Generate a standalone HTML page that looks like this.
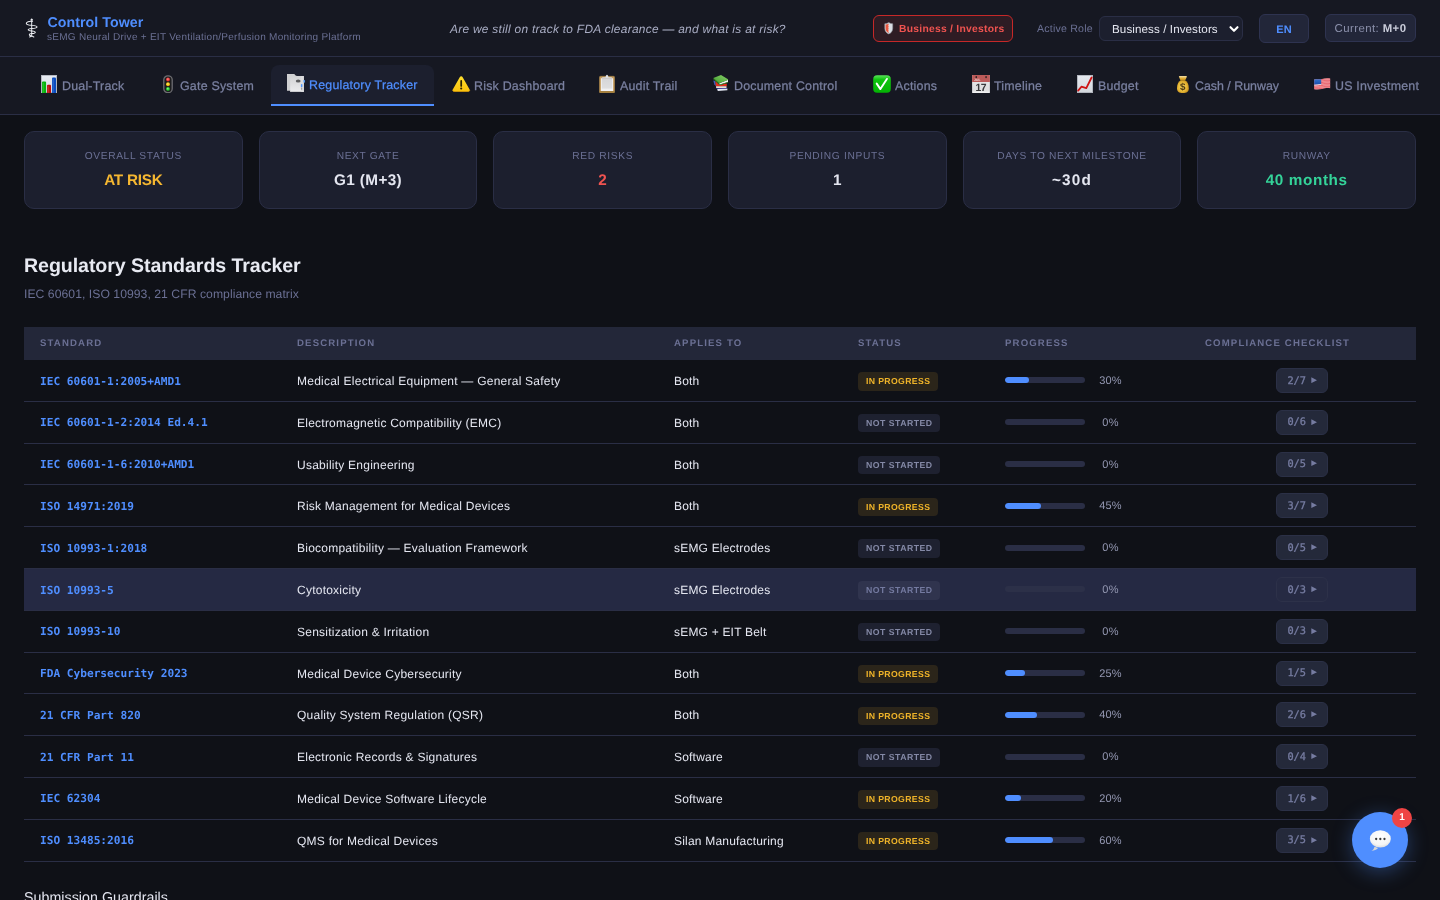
<!DOCTYPE html>
<html lang="en">
<head>
<meta charset="utf-8">
<title>Control Tower — Regulatory Tracker</title>
<style>
*{box-sizing:border-box;margin:0;padding:0}
html,body{width:1440px;height:900px;overflow:hidden}
body{text-rendering:geometricPrecision;background:#0f1117;color:#e4e6f0;font-family:"Liberation Sans",sans-serif;font-size:12px;position:relative}
svg{display:block}
#app{position:absolute;left:0;top:0;width:1440px;height:900px;overflow:hidden;will-change:transform}
/* ---------- header ---------- */
.hdr{position:absolute;left:0;top:0;width:1440px;height:57px;background:#161822;border-bottom:1px solid #2a2e45}
.logo{position:absolute;left:25px;top:17.700px;width:14px;height:20px}
.brand{position:absolute;left:47.500px;top:14px;font-size:14.2px;font-weight:700;color:#4f8eff;line-height:18px;white-space:nowrap;letter-spacing:.05px}
.sub{position:absolute;left:47px;top:31px;font-size:10px;color:#6b7094;line-height:13.4px;white-space:nowrap;letter-spacing:.27px}
.tag{position:absolute;left:450px;top:21px;font-size:11.9px;font-style:italic;color:#a9adc4;line-height:16px;white-space:nowrap;letter-spacing:.29px}
.rolebadge{position:absolute;left:873px;top:15px;width:140px;height:27px;border:1px solid #c62828;border-radius:6px;background:#2e1c24;color:#ef5350;font-weight:700;font-size:10.3px;line-height:25px;white-space:nowrap}
.rolebadge svg{position:absolute;left:10px;top:6px}
.rolebadge span{position:absolute;left:25px;top:.7px;letter-spacing:.27px}
.arole{position:absolute;left:1037px;top:21.800px;font-size:10.6px;color:#6b7094;line-height:14px;white-space:nowrap;letter-spacing:.2px}
.sel{position:absolute;left:1099px;top:16px;width:144px;height:25px;border:1px solid #2a2e45;border-radius:6px;background:#1c1f2e;color:#e4e6f0;font-size:11.6px;line-height:24px;white-space:nowrap}
.sel span{position:absolute;left:12px;top:.9px;letter-spacing:.1px}
.sel svg{position:absolute;right:2px;top:5.500px}
.en{position:absolute;left:1259px;top:14px;width:50px;height:29px;border:1px solid #2e3350;border-radius:6px;background:#222639;color:#4f8eff;font-weight:700;font-size:11px;line-height:30px;text-align:center;letter-spacing:0}
.cur{position:absolute;left:1325px;top:14px;width:91px;height:28px;border:1px solid #2e3350;border-radius:6px;background:#222639;color:#8b90ab;font-size:11.4px;line-height:28px;text-align:center;white-space:nowrap;letter-spacing:.43px}
.cur b{color:#c9ccda}
/* ---------- nav ---------- */
.nav{position:absolute;left:0;top:57px;width:1440px;height:58px;background:#161822;border-bottom:1px solid #2a2e45}
.tab{position:absolute;top:8px;height:41px;color:#7a80a0;font-size:12.4px;font-weight:400;line-height:40px;white-space:nowrap;letter-spacing:.22px}
.tab svg{position:absolute}
.tab span{position:absolute;left:38px;top:1px;-webkit-text-stroke:.25px currentColor}
.tab.on{background:#1c1f2e;border-radius:8px 8px 0 0;border-bottom:2px solid #4f8eff;color:#4f8eff}
.tab.on span{top:0}
/* ---------- cards ---------- */
.cards{position:absolute;left:24px;top:131px;width:1392px;height:78px;display:flex;gap:16px}
.card{flex:1 1 0;height:78px;background:#1c1f2e;border:1px solid #2a2e45;border-radius:10px;text-align:center}
.card .l{margin-top:19px;font-size:10.2px;line-height:12px;letter-spacing:.66px;color:#6b7094;text-transform:uppercase;white-space:nowrap}
.card .v{margin-top:8.400px;font-size:15.3px;line-height:20px;font-weight:700;color:#e4e6f0;white-space:nowrap;letter-spacing:.4px}
.amber{color:#f5b731!important}.red{color:#ef5350!important}.green{color:#34d399!important}
/* ---------- section ---------- */
h2{position:absolute;left:24px;top:252.900px;font-size:19.6px;line-height:26px;font-weight:700;color:#e8eaf2;white-space:nowrap;letter-spacing:-.075px}
.h2s{position:absolute;left:24px;top:286.200px;font-size:12.2px;line-height:16px;color:#6b7094;white-space:nowrap;letter-spacing:.04px}
/* ---------- table ---------- */
.tbl{position:absolute;left:24px;top:327px;width:1392px}
.th{position:relative;height:33px;background:#232739;color:#6b7094;font-size:9.6px;font-weight:700;letter-spacing:1.15px;line-height:33px;text-transform:uppercase}
.th span{position:absolute;top:0;white-space:nowrap}
.tr{position:relative;height:41.8px;border-bottom:1px solid #2a2e45}
.tr.hov{background:#252943}
.tr>*{position:absolute;white-space:nowrap}
.c1{left:16px;top:13.516px;font-family:"DejaVu Sans Mono","Liberation Mono",monospace;font-weight:700;font-size:11.15px;line-height:16px;color:#4f8eff;letter-spacing:0}
.c2{left:273px;top:13px;font-size:12px;line-height:16px;color:#e4e6f0;letter-spacing:.24px}
.c3{left:650px;top:13px;font-size:12px;line-height:16px;color:#e4e6f0;letter-spacing:.2px}
.st{left:834px;top:12.200px;height:18.500px;border-radius:4px;font-size:8.7px;font-weight:700;line-height:19.400px;padding:0 8px;letter-spacing:.36px}
.st.ip{background:#2b251a;color:#f0b429;width:80px}
.st.ns{background:#1e2130;color:#8489a6;width:82px;letter-spacing:.5px}
.bar{left:981px;top:17.400px;width:80px;height:6px;border-radius:3px;background:#2a2e45;overflow:hidden}
.bar i{display:block;height:6px;border-radius:3px;background:#4f8eff}
.hov .bar{background:#2c3048}
.pc{left:1066px;width:41px;top:13px;text-align:center;font-size:11px;line-height:16px;color:#9397b1;letter-spacing:.2px}
.cb{left:1252px;top:8px;width:52px;height:25px;border:1px solid #2b3046;border-radius:6px;background:#24293a;color:#767ca1;font-family:"DejaVu Sans Mono","Liberation Mono",monospace;font-size:10.3px;font-weight:400;line-height:23px}
.hov .cb{background:#262a43;border-color:#2d3149}.hov .st.ns{background:#30344e;color:#747aa0}
.cb span{position:absolute;left:10.400px;top:.6px;letter-spacing:0;-webkit-text-stroke:.3px #767ca1}
.cb svg{position:absolute;left:33.600px;top:7.900px}
.sg{position:absolute;left:24px;top:887.700px;font-size:14.2px;line-height:20px;color:#e4e6f0;white-space:nowrap;letter-spacing:.06px}
/* ---------- fab ---------- */
.fab{position:absolute;left:1352px;top:812px;width:56px;height:56px;border-radius:50%;background:#4f8eff;box-shadow:0 4px 20px rgba(79,142,255,.35)}
.fab svg{position:absolute;left:15.800px;top:16.300px}
.fab b{position:absolute;left:40px;top:-4px;width:20px;height:20px;border-radius:50%;background:#ef4444;color:#fff;font-size:10px;line-height:20px;text-align:center}
</style>
</head>
<body>
<div id="app">
<header class="hdr">
  <svg class="logo" viewBox="0 0 14 21" width="14" height="20" preserveAspectRatio="none" fill="none" stroke="#eef0f5" stroke-width="1.050" stroke-linecap="round" stroke-linejoin="round">
    <path d="M6.700 1.300V19.300" stroke-width="1"/>
    <path d="M5.800 2.100L6.700 1.100l.9 1"/>
    <path d="M7.600 3.500C4 3 1.300 4.200 1.300 5.700c0 1.600 3.200 1.800 5.400 2 2.800.3 5.300.5 5.300 1.700s-2.800 1.500-5.300 1.700c-1.900.2-3.500.5-3.500 1.300s1.800 1.100 3.500 1.300c2 .2 3.600.5 3.600 1.400s-1.800 1.100-3.600 1.300c-1.400.2-2.400.5-2.400 1.200 0 .6.700.9 1.500 1.100"/>
    <path d="M4.700 19.900L6.700 18.800l2.100 1.100"/>
  </svg>
  <div class="brand">Control Tower</div>
  <div class="sub">sEMG Neural Drive + EIT Ventilation/Perfusion Monitoring Platform</div>
  <div class="tag">Are we still on track to FDA clearance — and what is at risk?</div>
  <div class="rolebadge">
    <svg viewBox="0 0 12 14" width="9.500" height="12.500" preserveAspectRatio="none"><path d="M6 .6C4.400 1.600 2.700 2 1 2v5.200c0 3 2.100 5.100 5 6.200 2.900-1.100 5-3.200 5-6.200V2C9.300 2 7.600 1.600 6 .6z" fill="#d9dce3" stroke="#8d8f99" stroke-width=".7"/><path d="M6 1.700C4.800 2.400 3.500 2.800 2 2.900v4.300c0 2.400 1.700 4.100 4 5.100z" fill="#e8573f"/><path d="M6 3v8" stroke="#fff" stroke-width=".9" stroke-dasharray="1.2 1"/></svg>
    <span>Business / Investors</span>
  </div>
  <div class="arole">Active Role</div>
  <div class="sel"><span>Business / Investors</span>
    <svg viewBox="0 0 12 12" width="12" height="12" fill="none" stroke="#fff" stroke-width="2.100" stroke-linecap="round" stroke-linejoin="round"><path d="M2.500 4.200L6 7.800l3.500-3.600"/></svg>
  </div>
  <div class="en">EN</div>
  <div class="cur">Current: <b>M+0</b></div>
</header>
<nav class="nav">
  <div class="tab" style="left:24px"><svg style="left:17px;top:10px" viewBox="0 0 16 18" width="16" height="18"><defs><linearGradient id="gb" x1="0" y1="0" x2="0" y2="1"><stop offset="0" stop-color="#e9edf4"/><stop offset="1" stop-color="#d3d9e4"/></linearGradient></defs><rect x=".3" y=".3" width="15.400" height="17.400" fill="url(#gb)" stroke="#bfc3cd" stroke-width=".6"/><path d="M1 18V7.600a1 1 0 011-1h2.100a1 1 0 011 1V18z" fill="#06b30c"/><path d="M6 18v-7.200a1 1 0 011-1h2a1 1 0 011 1V18z" fill="#bb0d0d"/><path d="M11 18V3.600a1 1 0 011-1h2a1 1 0 011 1V18z" fill="#0a4cc0"/><path d="M2.100 17.800V8M7.100 17.800v-6.600M12.100 17.800V4" stroke="#fff" stroke-opacity=".25" stroke-width=".8"/></svg><span>Dual-Track</span></div>
  <div class="tab" style="left:142px"><svg style="left:21px;top:9.6px" viewBox="0 0 10 18.500" width="10" height="18.500"><defs><radialGradient id="lr" cx=".45" cy=".4" r=".6"><stop offset="0" stop-color="#ff8f8f"/><stop offset=".6" stop-color="#ee3a3a"/><stop offset="1" stop-color="#b51f1f"/></radialGradient><radialGradient id="ly" cx=".45" cy=".4" r=".6"><stop offset="0" stop-color="#fff56a"/><stop offset=".6" stop-color="#f4c315"/><stop offset="1" stop-color="#c98a0a"/></radialGradient><radialGradient id="lg" cx=".45" cy=".4" r=".6"><stop offset="0" stop-color="#8dff8d"/><stop offset=".6" stop-color="#27cf31"/><stop offset="1" stop-color="#118a1a"/></radialGradient></defs><rect x=".8" y=".8" width="8.400" height="16.900" rx="4" fill="#1d1d1f" stroke="#6d6d72" stroke-width="1.300"/><circle cx="5" cy="4.600" r="2" fill="url(#lr)"/><circle cx="5" cy="9.300" r="2" fill="url(#ly)"/><circle cx="5" cy="14" r="2" fill="url(#lg)"/></svg><span>Gate System</span></div>
  <div class="tab on" style="left:271px;width:163px"><svg style="left:16px;top:9px" viewBox="0 0 18 18" width="18" height="18"><defs><linearGradient id="pg" x1="0" y1="0" x2="0" y2="1"><stop offset="0" stop-color="#d2d2d4"/><stop offset="1" stop-color="#ececee"/></linearGradient><filter id="bl" x="-50%" y="-50%" width="200%" height="200%"><feGaussianBlur stdDeviation=".7"/></filter></defs><path d="M0 .1h7.300l1.700 1.800v14.800H0z" fill="#d0d0d2"/><path d="M3.200 1.800h6l.8.200h6.800V18H3.200z" fill="url(#pg)"/><path d="M13.800 1.900h3v16H14z" fill="#dcdcde"/><path d="M3.200 17.300h11v.7h-11z" fill="#bdbdc0"/><ellipse cx="11.200" cy="6.900" rx="2.400" ry="1.500" fill="#46464a" opacity=".85" filter="url(#bl)"/><rect x="16.400" y="5.900" width="1.500" height="2.900" rx=".7" fill="#5ea6ff"/><rect x="13.900" y="10" width="1.500" height="3.300" rx=".7" fill="#4f97ff"/><rect x="14.100" y="13.600" width="1.100" height="2.200" rx=".5" fill="#9a9a9e"/></svg><span>Regulatory Tracker</span></div>
  <div class="tab" style="left:436px"><svg style="left:16.2px;top:9.5px" viewBox="0 0 20 18" width="18.400" height="17" preserveAspectRatio="none"><defs><linearGradient id="wg" x1="0" y1="0" x2="0" y2="1"><stop offset="0" stop-color="#ffdf2e"/><stop offset="1" stop-color="#f9c20e"/></linearGradient></defs><path d="M10 1.200c.7 0 1.200.4 1.600 1.100l7.400 12.800c.7 1.300.1 2.400-1.400 2.400H2.400C.9 17.500.3 16.400 1 15.100L8.400 2.300C8.800 1.600 9.300 1.200 10 1.200z" fill="url(#wg)"/><path d="M1 15.600c-.5 1.100.1 1.900 1.400 1.900h15.200c1.300 0 1.900-.8 1.400-1.900" fill="none" stroke="#dfa10a" stroke-width=".8"/><path d="M10 6.300v5.300" stroke="#2a2203" stroke-width="1.900" stroke-linecap="round"/><ellipse cx="10" cy="14.300" rx="1.150" ry="1" fill="#2a2203"/></svg><span>Risk Dashboard</span></div>
  <div class="tab" style="left:582px"><svg style="left:16.5px;top:9px" viewBox="0 0 16 19.200" width="16" height="19.200"><defs><linearGradient id="cp" x1="0" y1="0" x2="0" y2="1"><stop offset="0" stop-color="#d6d6d8"/><stop offset=".8" stop-color="#dededf"/><stop offset="1" stop-color="#f6f6f7"/></linearGradient></defs><rect x=".4" y="2.300" width="15.200" height="16.600" rx="1.100" fill="#c59c5e" stroke="#a98446" stroke-width=".6"/><path d="M.7 17h14.600v1.300a.6.600 0 01-.6.600H1.300a.6.600 0 01-.6-.6z" fill="#a5803f"/><rect x="1.900" y="4.300" width="12.200" height="12.700" fill="#f3f3f5"/><rect x="2.700" y="5" width="10.600" height="11" fill="url(#cp)"/><path d="M3.200 4.600V3.300h3.300C6.800 1.700 7.300.8 8 .8s1.200.9 1.500 2.500h3.300v1.300z" fill="#dfe1e6"/><path d="M3.200 4.300h9.600" stroke="#a9abb2" stroke-width=".5"/></svg><span>Audit Trail</span></div>
  <div class="tab" style="left:696px"><svg style="left:17px;top:9px" viewBox="0 0 16 18" width="16" height="18"><defs><linearGradient id="bk" x1="0" y1="1" x2="1" y2="0"><stop offset="0" stop-color="#3f9f2b"/><stop offset="1" stop-color="#8ad06c"/></linearGradient></defs><path d="M.3 6.400L2.300 7.200 3 12.300 1.300 10.200z" fill="#3c62c8"/><path d="M2.900 13.800L14.400 14.300v.8L3.600 14.800z" fill="#3a3fa6"/><path d="M4.200 14.900L14.400 14.800v1.400L4.800 17.100z" fill="#e4e8f2"/><path d="M2.300 7L2.900 12.200H13.800V9.400L6.600 11z" fill="#e22f1d"/><path d="M3 12.200h10.500v1.700H3.200z" fill="#eadfd6"/><path d="M.4 4.100L6.300 9.100 6.700 11 .6 5.500z" fill="#2a7c1a"/><path d="M6.300 9.200L15 5.800v2.300L6.700 10.700z" fill="#f0f0f2"/><path d="M6.600 10.500L15 7.900v.8L6.700 11.200z" fill="#3a8e28"/><path d="M.3 4L8 1l7 4.300v.6L6.300 9.200z" fill="url(#bk)"/></svg><span>Document Control</span></div>
  <div class="tab" style="left:857px"><svg style="left:16px;top:10px" viewBox="0 0 18 18" width="18" height="18"><defs><linearGradient id="ck" x1="0" y1="0" x2="0" y2="1"><stop offset="0" stop-color="#5be35b"/><stop offset=".25" stop-color="#10c410"/><stop offset="1" stop-color="#04b304"/></linearGradient></defs><rect x=".2" y=".2" width="17.600" height="17.600" rx="4" fill="url(#ck)"/><path d="M3.700 8.600l3.700 5.500 6.500-10.200" fill="none" stroke="#fff" stroke-width="1.900" stroke-linecap="round" stroke-linejoin="round"/></svg><span>Actions</span></div>
  <div class="tab" style="left:956px"><svg style="left:16px;top:10px" viewBox="0 0 18 18" width="18" height="18"><defs><linearGradient id="cb" x1="0" y1="0" x2="0" y2="1"><stop offset="0" stop-color="#e9e9ea"/><stop offset=".85" stop-color="#dededf"/><stop offset="1" stop-color="#f4f4f5"/></linearGradient></defs><rect x=".1" y="0" width="17.800" height="18" rx=".5" fill="url(#cb)"/><path d="M.1.500a.5.500 0 01.5-.5h16.800a.5.500 0 01.5.5V7H.1z" fill="#bb5a59"/><rect x="3.500" y="1" width="1.500" height="2.200" rx=".7" fill="#2c2222"/><rect x="13.300" y="1" width="1.500" height="2.200" rx=".7" fill="#2c2222"/><text x="1.900" y="5.900" font-family="Liberation Sans,sans-serif" font-size="3.300" font-weight="700" fill="#f3dcdb">JUL</text><text x="8.800" y="15.900" font-family="Liberation Sans,sans-serif" font-size="10.400" font-weight="700" fill="#3a3a3c" text-anchor="middle" letter-spacing="-.5">17</text></svg><span>Timeline</span></div>
  <div class="tab" style="left:1060px"><svg style="left:17px;top:10px" viewBox="0 0 16 18" width="16" height="18"><defs><linearGradient id="ub" x1="0" y1="0" x2="0" y2="1"><stop offset="0" stop-color="#e6eaf0"/><stop offset="1" stop-color="#d3d7dd"/></linearGradient></defs><rect x=".3" y=".3" width="15.400" height="17.400" fill="url(#ub)" stroke="#bfc3cb" stroke-width=".6"/><path d="M1.200 15.600L4.400 11.700l4.900 1.400L14.600 2.500" fill="none" stroke="#cf1414" stroke-width="1.800" stroke-linejoin="round" stroke-linecap="round"/></svg><span>Budget</span></div>
  <div class="tab" style="left:1157px"><svg style="left:19px;top:10.3px" viewBox="0 0 14 18.500" width="14" height="18.500"><defs><radialGradient id="mb" cx=".45" cy=".5" r=".62"><stop offset="0" stop-color="#f9dc62"/><stop offset=".6" stop-color="#e7b736"/><stop offset="1" stop-color="#c08a17"/></radialGradient><linearGradient id="mt" x1="0" y1="0" x2="0" y2="1"><stop offset="0" stop-color="#f4e0a8"/><stop offset=".5" stop-color="#e0ad36"/><stop offset="1" stop-color="#b8820f"/></linearGradient></defs><path d="M2.800 1.400C4 .7 5.500 1.300 6.800 1 8.100 1.300 9.700.7 11 1.400 10.500 3 9.400 4 9.100 5.800H4.600C4.300 4 3.300 3 2.800 1.400z" fill="url(#mt)"/><path d="M4.600 5.600C2.400 6.400 1 9.400 1 13.200c0 3.400 2 4.900 5.900 4.900s5.900-1.500 5.900-4.900c0-3.800-1.400-6.800-3.600-7.600z" fill="url(#mb)"/><text x="6.800" y="15.300" font-family="Liberation Sans,sans-serif" font-size="9.800" font-weight="700" fill="#4e3812" text-anchor="middle">$</text></svg><span style="letter-spacing:0">Cash / Runway</span></div>
  <div class="tab" style="left:1297px"><svg style="left:17px;top:12.5px" viewBox="0 0 16.500 12" width="16.500" height="12"><defs><clipPath id="fw"><path d="M.2 1.400C3 .9 5.500 1.500 8 1 10.500.4 13 0 16.300.6V10.300C13 9.700 10.500 10.500 8 11 5.500 11.500 3 11.700.2 11.200z"/></clipPath><linearGradient id="fc" x1="0" y1="0" x2="0" y2="1"><stop offset="0" stop-color="#3a7ad0"/><stop offset=".75" stop-color="#1f57b4"/><stop offset="1" stop-color="#1a4ea8"/></linearGradient></defs><g clip-path="url(#fw)"><rect width="16.500" height="12" fill="#f6a9ad"/><path d="M0 1.90C3 1.40 5.500 2.00 8 1.50 S13 0.50 16.500 1.10" stroke="#e3505b" stroke-width=".75" fill="none"/><path d="M0 3.40C3 2.90 5.500 3.50 8 3.00 S13 2.00 16.500 2.60" stroke="#e3505b" stroke-width=".75" fill="none"/><path d="M0 4.90C3 4.40 5.500 5.00 8 4.50 S13 3.50 16.500 4.10" stroke="#e3505b" stroke-width=".75" fill="none"/><path d="M0 6.40C3 5.90 5.500 6.50 8 6.00 S13 5.00 16.500 5.60" stroke="#e3505b" stroke-width=".75" fill="none"/><path d="M0 7.90C3 7.40 5.500 8.00 8 7.50 S13 6.50 16.500 7.10" stroke="#e3505b" stroke-width=".75" fill="none"/><path d="M0 9.40C3 8.90 5.500 9.50 8 9.00 S13 8.00 16.500 8.60" stroke="#e3505b" stroke-width=".75" fill="none"/><path d="M0 10.90C3 10.40 5.500 11.00 8 10.50 S13 9.50 16.500 10.10" stroke="#e3505b" stroke-width=".75" fill="none"/><path d="M0 0h7.200v6.100C4.800 6.500 2.400 6.500 0 6.800z" fill="url(#fc)"/><path d="M0 6.800C2.400 6.500 4.800 6.500 7.200 6.100v.7C4.800 7.200 2.400 7.200 0 7.500z" fill="#d6ebff"/></g></svg><span>US Investment</span></div>
</nav>
<section class="cards">
  <div class="card"><div class="l">Overall Status</div><div class="v amber" style="letter-spacing:-.25px">AT RISK</div></div>
  <div class="card"><div class="l">Next Gate</div><div class="v">G1 (M+3)</div></div>
  <div class="card"><div class="l">Red Risks</div><div class="v red">2</div></div>
  <div class="card"><div class="l">Pending Inputs</div><div class="v">1</div></div>
  <div class="card"><div class="l">Days to Next Milestone</div><div class="v" style="letter-spacing:1.2px">~30d</div></div>
  <div class="card"><div class="l">Runway</div><div class="v green" style="letter-spacing:.6px">40 months</div></div>
</section>
<h2>Regulatory Standards Tracker</h2>
<div class="h2s">IEC 60601, ISO 10993, 21 CFR compliance matrix</div>
<section class="tbl">
  <div class="th"><span style="left:16px">Standard</span><span style="left:273px">Description</span><span style="left:650px">Applies To</span><span style="left:834px">Status</span><span style="left:981px">Progress</span><span style="left:1181px">Compliance Checklist</span></div>
  <div class="tr"><div class="c1">IEC 60601-1:2005+AMD1</div><div class="c2">Medical Electrical Equipment — General Safety</div><div class="c3">Both</div><div class="st ip">IN PROGRESS</div><div class="bar"><i style="width:30%"></i></div><div class="pc">30%</div><div class="cb"><span>2/7</span><svg viewBox="0 0 6.500 6.500" width="6.500" height="6.500"><path d="M.3.300L6.100 3.200.3 6.100z" fill="#767ca1"/></svg></div></div>
  <div class="tr"><div class="c1">IEC 60601-1-2:2014 Ed.4.1</div><div class="c2">Electromagnetic Compatibility (EMC)</div><div class="c3">Both</div><div class="st ns">NOT STARTED</div><div class="bar"></div><div class="pc">0%</div><div class="cb"><span>0/6</span><svg viewBox="0 0 6.500 6.500" width="6.500" height="6.500"><path d="M.3.300L6.100 3.200.3 6.100z" fill="#767ca1"/></svg></div></div>
  <div class="tr"><div class="c1">IEC 60601-1-6:2010+AMD1</div><div class="c2">Usability Engineering</div><div class="c3">Both</div><div class="st ns">NOT STARTED</div><div class="bar"></div><div class="pc">0%</div><div class="cb"><span>0/5</span><svg viewBox="0 0 6.500 6.500" width="6.500" height="6.500"><path d="M.3.300L6.100 3.200.3 6.100z" fill="#767ca1"/></svg></div></div>
  <div class="tr"><div class="c1">ISO 14971:2019</div><div class="c2">Risk Management for Medical Devices</div><div class="c3">Both</div><div class="st ip">IN PROGRESS</div><div class="bar"><i style="width:45%"></i></div><div class="pc">45%</div><div class="cb"><span>3/7</span><svg viewBox="0 0 6.500 6.500" width="6.500" height="6.500"><path d="M.3.300L6.100 3.200.3 6.100z" fill="#767ca1"/></svg></div></div>
  <div class="tr"><div class="c1">ISO 10993-1:2018</div><div class="c2">Biocompatibility — Evaluation Framework</div><div class="c3">sEMG Electrodes</div><div class="st ns">NOT STARTED</div><div class="bar"></div><div class="pc">0%</div><div class="cb"><span>0/5</span><svg viewBox="0 0 6.500 6.500" width="6.500" height="6.500"><path d="M.3.300L6.100 3.200.3 6.100z" fill="#767ca1"/></svg></div></div>
  <div class="tr hov"><div class="c1">ISO 10993-5</div><div class="c2">Cytotoxicity</div><div class="c3">sEMG Electrodes</div><div class="st ns">NOT STARTED</div><div class="bar"></div><div class="pc">0%</div><div class="cb"><span>0/3</span><svg viewBox="0 0 6.500 6.500" width="6.500" height="6.500"><path d="M.3.300L6.100 3.200.3 6.100z" fill="#767ca1"/></svg></div></div>
  <div class="tr"><div class="c1">ISO 10993-10</div><div class="c2">Sensitization &amp; Irritation</div><div class="c3">sEMG + EIT Belt</div><div class="st ns">NOT STARTED</div><div class="bar"></div><div class="pc">0%</div><div class="cb"><span>0/3</span><svg viewBox="0 0 6.500 6.500" width="6.500" height="6.500"><path d="M.3.300L6.100 3.200.3 6.100z" fill="#767ca1"/></svg></div></div>
  <div class="tr"><div class="c1">FDA Cybersecurity 2023</div><div class="c2">Medical Device Cybersecurity</div><div class="c3">Both</div><div class="st ip">IN PROGRESS</div><div class="bar"><i style="width:25%"></i></div><div class="pc">25%</div><div class="cb"><span>1/5</span><svg viewBox="0 0 6.500 6.500" width="6.500" height="6.500"><path d="M.3.300L6.100 3.200.3 6.100z" fill="#767ca1"/></svg></div></div>
  <div class="tr"><div class="c1">21 CFR Part 820</div><div class="c2">Quality System Regulation (QSR)</div><div class="c3">Both</div><div class="st ip">IN PROGRESS</div><div class="bar"><i style="width:40%"></i></div><div class="pc">40%</div><div class="cb"><span>2/6</span><svg viewBox="0 0 6.500 6.500" width="6.500" height="6.500"><path d="M.3.300L6.100 3.200.3 6.100z" fill="#767ca1"/></svg></div></div>
  <div class="tr"><div class="c1">21 CFR Part 11</div><div class="c2">Electronic Records &amp; Signatures</div><div class="c3">Software</div><div class="st ns">NOT STARTED</div><div class="bar"></div><div class="pc">0%</div><div class="cb"><span>0/4</span><svg viewBox="0 0 6.500 6.500" width="6.500" height="6.500"><path d="M.3.300L6.100 3.200.3 6.100z" fill="#767ca1"/></svg></div></div>
  <div class="tr"><div class="c1">IEC 62304</div><div class="c2">Medical Device Software Lifecycle</div><div class="c3">Software</div><div class="st ip">IN PROGRESS</div><div class="bar"><i style="width:20%"></i></div><div class="pc">20%</div><div class="cb"><span>1/6</span><svg viewBox="0 0 6.500 6.500" width="6.500" height="6.500"><path d="M.3.300L6.100 3.200.3 6.100z" fill="#767ca1"/></svg></div></div>
  <div class="tr"><div class="c1">ISO 13485:2016</div><div class="c2">QMS for Medical Devices</div><div class="c3">Silan Manufacturing</div><div class="st ip">IN PROGRESS</div><div class="bar"><i style="width:60%"></i></div><div class="pc">60%</div><div class="cb"><span>3/5</span><svg viewBox="0 0 6.500 6.500" width="6.500" height="6.500"><path d="M.3.300L6.100 3.200.3 6.100z" fill="#767ca1"/></svg></div></div>
</section>
<div class="sg">Submission Guardrails</div>
<div class="fab"><svg viewBox="0 0 22 22" width="24" height="24"><defs><radialGradient id="bg" cx=".5" cy=".35" r=".75"><stop offset="0" stop-color="#fff"/><stop offset=".65" stop-color="#f5f5f5"/><stop offset="1" stop-color="#cfcfcf"/></radialGradient></defs><path d="M3.100 21c1.600-.8 2.500-2.100 2.800-3.900l3.300 1.300c-1.400 1.600-3.500 2.500-6.100 2.600z" fill="#d6d6d6"/><ellipse cx="11.300" cy="10" rx="9.600" ry="7.900" fill="url(#bg)"/><circle cx="7.500" cy="10.100" r="1.050" fill="#3a3a3a"/><circle cx="11.300" cy="10.100" r="1.050" fill="#3a3a3a"/><circle cx="15.100" cy="10.100" r="1.050" fill="#3a3a3a"/></svg><b>1</b></div>
</div>
</body>
</html>
